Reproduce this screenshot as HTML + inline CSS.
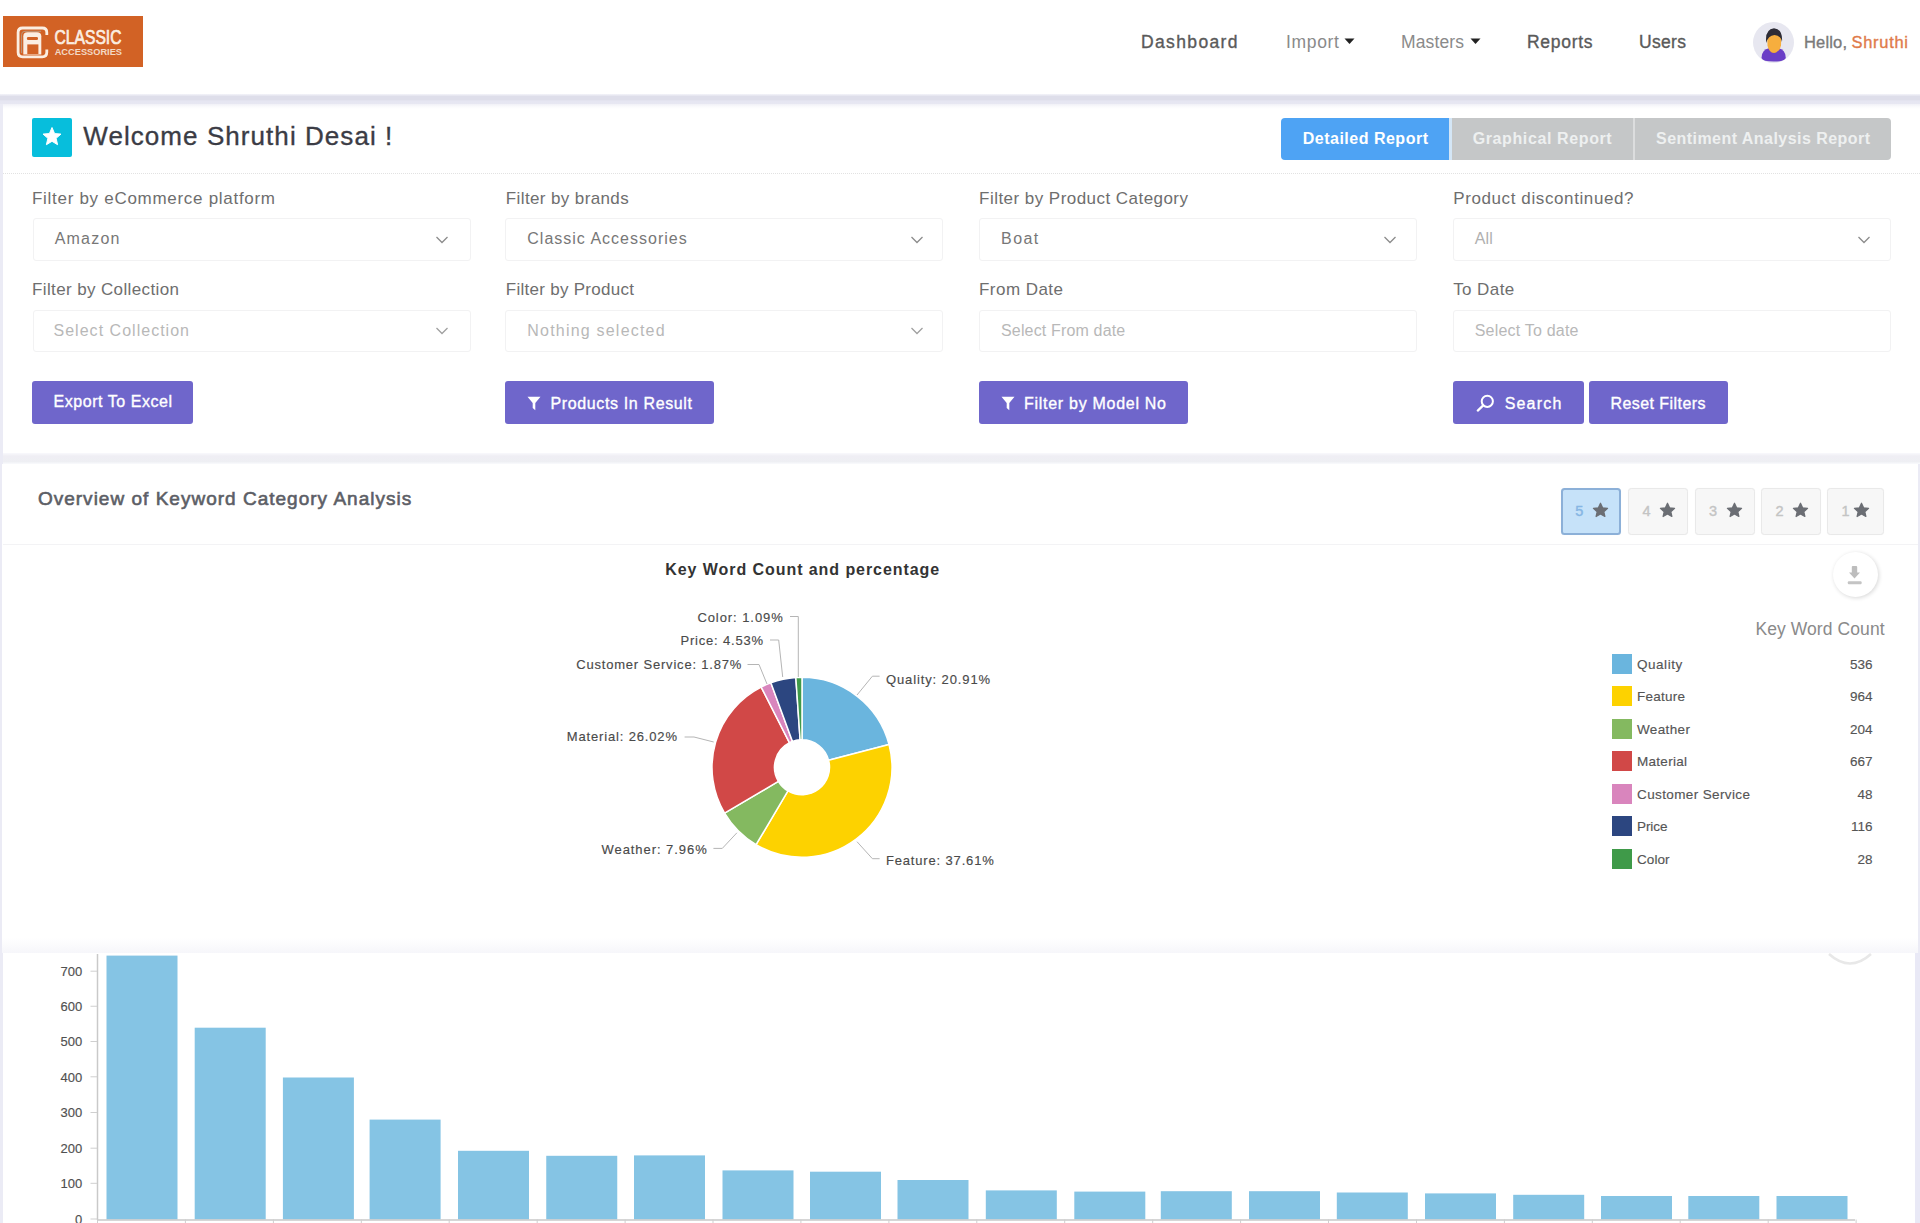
<!DOCTYPE html>
<html><head><meta charset="utf-8"><title>Dashboard</title>
<style>
*{margin:0;padding:0;box-sizing:border-box}
html,body{width:1920px;height:1223px;overflow:hidden}
body{background:#fff;position:relative;font-family:'Liberation Sans',sans-serif}
.a{position:absolute}
.t{position:absolute;white-space:nowrap;line-height:1}
#nav{left:-12px;top:-12px;width:1944px;height:106px;background:#fff}
#band{left:-12px;top:93.5px;width:1944px;height:10.5px;background:linear-gradient(#f4f4fa 0,#dedeea 2.5px,#dedeea 6px,#e6e6f2 6.8px,#e7e7f2 10.5px)}
#card1{left:3px;top:104px;width:1929px;height:349px;background:linear-gradient(#f1f1f7 0,#fbfbfd 3px,#fff 5px)}
#gap1{left:3px;top:452.5px;width:1929px;height:11px;background:linear-gradient(#f9f9fc 0,#efeef4 3px,#eeeff3 8.5px,#f9fafd 11px)}
#card2{left:2px;top:463.5px;width:1916px;height:489.5px;background:linear-gradient(#fff 0,#fff 474px,#f6f6fa 489.5px)}
#card3{left:3px;top:953px;width:1912px;height:282px;background:#fff}
.sep{height:1px}
#logo{left:3px;top:16px;width:140px;height:51px;background:#d26225}
#avatar{left:1752.6px;top:21.5px;width:41px;height:41px;border-radius:50%;background:#e7e7f0;overflow:hidden}
#starbox{left:32px;top:118px;width:40px;height:39px;background:#07bedc;border-radius:2px}
.tab{top:117.5px;height:42.5px}
#tab1{left:1281px;width:167.5px;background:#4ea3f4;border-radius:4px 0 0 4px}
#tab2{left:1451.5px;width:181.5px;background:#c5c7c8}
#tab3{left:1634.8px;width:256.2px;background:#c5c7c8;border-radius:0 4px 4px 0}
.sel{height:43px;width:438px;border:1px solid #f2f2f3;border-radius:3px;background:#fff}
.chev{width:9px;height:9px;border-right:1.5px solid #8a8a8a;border-bottom:1.5px solid #8a8a8a;transform:rotate(45deg)}
.btn{background:#6f66cb;border-radius:3px;height:43px}
.sb{top:487.5px;width:60px;height:47px;border:1.5px solid #e9e9e9;border-radius:3.5px;background:#f7f7f7;box-shadow:0 0 1px rgba(0,0,0,.06)}
.sb.on{background:#c6e2f9;border:2px solid #8cb0d8}
#dl{left:1833px;top:552px;width:45px;height:45px;border-radius:50%;background:#fff;box-shadow:1px 1px 4px rgba(0,0,0,.16)}
.sw{left:1612px;width:20px;height:20px}

#wrap{position:absolute;left:-12px;top:-12px;width:1944px;height:1247px;background:#ebebf5}
#inner{position:absolute;left:12px;top:12px;width:1920px;height:1223px}

</style></head><body>
<div id="wrap"><div id="inner">
<div class="a" id="nav"></div>
<div class="a" id="band"></div>
<div class="a" id="card1"></div>
<div class="a" id="gap1"></div>
<div class="a" id="card2"></div>
<div class="a" id="card3"></div>
<div class="a sep" style="left:3px;top:173px;width:1917px;border-top:1px dotted #e2e2e2"></div>
<div class="a sep" style="left:3px;top:544px;width:1915px;background:#f3f3f5"></div>
<div class="a" id="logo">
<svg width="140" height="51" viewBox="0 0 140 51" style="position:absolute;left:0;top:0">
 <path d="M43.8 19.1 L43.8 16.5 Q43.8 12 39.3 12 L19.6 12 Q15.1 12 15.1 16.5 L15.1 36.3 Q15.1 40.8 19.6 40.8 L39.3 40.8 Q43.8 40.8 43.8 36.3 L43.8 33.5" fill="none" stroke="#fbeee2" stroke-width="2.8"/>
 <path d="M18.6 37 L18.6 18.5 Q18.6 15.3 22 15.3 L38 15.3" fill="none" stroke="#b99a80" stroke-width="1"/>
 <path d="M20.3 38.5 L20.3 20.2 Q20.3 16.2 24.6 16.2 L34 16.2 Q38.3 16.2 38.3 20.2 L38.3 38.5 Z" fill="#fbeee2"/>
 <rect x="23.9" y="21.1" width="11.1" height="3" rx="1.3" fill="#d26225"/>
 <rect x="24.3" y="28.4" width="11.1" height="9.6" fill="#d26225"/>
 <text x="51.5" y="28.4" font-family="Liberation Sans" font-size="20" fill="#fbeee2" stroke="#fbeee2" stroke-width="0.7" textLength="67" lengthAdjust="spacingAndGlyphs">CLASSIC</text>
 <text x="51.7" y="38.5" font-family="Liberation Sans" font-weight="bold" font-size="8.4" fill="#f3d9c6" textLength="67.3" lengthAdjust="spacingAndGlyphs">ACCESSORIES</text>
</svg></div>
<svg class="a" style="left:1344px;top:38px" width="11" height="7" viewBox="0 0 11 7"><path d="M0.5 0.5 L10.5 0.5 L5.5 6 Z" fill="#222"/></svg>
<svg class="a" style="left:1470px;top:38px" width="11" height="7" viewBox="0 0 11 7"><path d="M0.5 0.5 L10.5 0.5 L5.5 6 Z" fill="#222"/></svg>
<div class="a" id="avatar">
<svg width="41" height="41" viewBox="0 0 41 41" style="position:absolute;left:0;top:0">
 <path d="M8.5 36 Q8.5 27.5 16.5 26 L25 26 Q32.8 27.5 32.8 36 Q31.5 39.6 20.6 39.6 Q9.5 39.6 8.5 36 Z" fill="#6a3ec6"/>
 <path d="M17.3 24 L24.5 24 L24 30 Q20.9 32 17.8 30 Z" fill="#eaa236"/>
 <path d="M14.3 18 Q14.3 11.5 21.2 11.5 Q28.2 11.5 28.2 18 L28 23.5 Q27 30 21.2 30.5 Q15.3 30 14.5 23.5 Z" fill="#f6ae3e"/>
 <path d="M13.3 21 Q11.5 7.5 21 6.3 Q30 7 29 20 Q28 13.5 21.5 13 Q15 13.5 13.3 21 Z" fill="#2d2c36"/>
</svg></div>
<div class="a" id="starbox">
<svg width="40" height="39" viewBox="0 0 40 39" style="position:absolute;left:0;top:0">
 <path d="M20 9.5 L22.6 15.6 L29 16.1 L24.1 20.3 L25.6 26.7 L20 23.3 L14.4 26.7 L15.9 20.3 L11 16.1 L17.4 15.6 Z" fill="#fff" stroke="#fff" stroke-width="1" stroke-linejoin="round"/>
</svg></div>
<div class="a tab" style="left:1448px;width:4px;background:#d4e6f6"></div><div class="a tab" style="left:1632px;width:4px;background:#dcddde"></div><div class="a tab" id="tab1"></div><div class="a tab" id="tab2"></div><div class="a tab" id="tab3"></div>
<div class="a sel" style="left:33px;top:218px"></div>
<div class="a sel" style="left:33px;top:309.5px;height:42.5px"></div>
<div class="a sel" style="left:505px;top:218px"></div>
<div class="a sel" style="left:505px;top:309.5px;height:42.5px"></div>
<div class="a sel" style="left:979px;top:218px"></div>
<div class="a sel" style="left:979px;top:309.5px;height:42.5px"></div>
<div class="a sel" style="left:1453px;top:218px"></div>
<div class="a sel" style="left:1453px;top:309.5px;height:42.5px"></div>
<svg class="a" style="left:435px;top:235px" width="14" height="10" viewBox="0 0 14 10"><path d="M1.5 2 L7 7.5 L12.5 2" fill="none" stroke="#8c8c8c" stroke-width="1.3"/></svg>
<svg class="a" style="left:909.5px;top:235px" width="14" height="10" viewBox="0 0 14 10"><path d="M1.5 2 L7 7.5 L12.5 2" fill="none" stroke="#8c8c8c" stroke-width="1.3"/></svg>
<svg class="a" style="left:1382.5px;top:235px" width="14" height="10" viewBox="0 0 14 10"><path d="M1.5 2 L7 7.5 L12.5 2" fill="none" stroke="#8c8c8c" stroke-width="1.3"/></svg>
<svg class="a" style="left:1856.5px;top:235px" width="14" height="10" viewBox="0 0 14 10"><path d="M1.5 2 L7 7.5 L12.5 2" fill="none" stroke="#8c8c8c" stroke-width="1.3"/></svg>
<svg class="a" style="left:435px;top:326px" width="14" height="10" viewBox="0 0 14 10"><path d="M1.5 2 L7 7.5 L12.5 2" fill="none" stroke="#a0a0a0" stroke-width="1.3"/></svg>
<svg class="a" style="left:909.5px;top:326px" width="14" height="10" viewBox="0 0 14 10"><path d="M1.5 2 L7 7.5 L12.5 2" fill="none" stroke="#a0a0a0" stroke-width="1.3"/></svg>
<div class="a btn" style="left:32px;top:380.5px;width:160.5px"></div>
<div class="a btn" style="left:505px;top:381.3px;width:208.7px"></div>
<div class="a btn" style="left:979px;top:381.3px;width:208.5px"></div>
<div class="a btn" style="left:1453px;top:381.3px;width:130.7px"></div>
<div class="a btn" style="left:1588.5px;top:381.3px;width:139px"></div>
<svg class="a" style="left:527px;top:396px" width="14" height="15" viewBox="0 0 14 15"><path d="M0.5 0.8 L13.5 0.8 L8.3 7 L8.3 14.2 L5.7 12 L5.7 7 Z" fill="#fff"/></svg>
<svg class="a" style="left:1000.5px;top:396px" width="14" height="15" viewBox="0 0 14 15"><path d="M0.5 0.8 L13.5 0.8 L8.3 7 L8.3 14.2 L5.7 12 L5.7 7 Z" fill="#fff"/></svg>
<svg class="a" style="left:1475.5px;top:393.5px" width="19" height="18" viewBox="0 0 19 18"><circle cx="11.3" cy="7.3" r="5.6" fill="none" stroke="#fff" stroke-width="2"/><path d="M7.2 11.4 L1.8 16.6" stroke="#fff" stroke-width="2.2" stroke-linecap="round"/></svg>
<div class="a sb on" style="left:1561.3px;width:60px"></div>
<span class="t" style="left:1575.3px;top:503.9px;font-size:14.5px;font-weight:normal;-webkit-text-stroke:0.4px #86b6e4;color:#86b6e4">5</span>
<svg class="a" style="left:1591.8px;top:502.3px" width="17" height="16" viewBox="0 0 17 16"><path d="M8.5 1.2 L10.6 5.8 L15.6 6.3 L11.8 9.7 L12.9 14.5 L8.5 12 L4.1 14.5 L5.2 9.7 L1.4 6.3 L6.4 5.8 Z" fill="#6b6e74" stroke="#6b6e74" stroke-width="1.2" stroke-linejoin="round"/></svg>
<div class="a sb" style="left:1628.4px;width:60px"></div>
<span class="t" style="left:1642.4px;top:503.9px;font-size:14.5px;font-weight:normal;-webkit-text-stroke:0.4px #c4c4c4;color:#c4c4c4">4</span>
<svg class="a" style="left:1658.9px;top:502.3px" width="17" height="16" viewBox="0 0 17 16"><path d="M8.5 1.2 L10.6 5.8 L15.6 6.3 L11.8 9.7 L12.9 14.5 L8.5 12 L4.1 14.5 L5.2 9.7 L1.4 6.3 L6.4 5.8 Z" fill="#6b6e74" stroke="#6b6e74" stroke-width="1.2" stroke-linejoin="round"/></svg>
<div class="a sb" style="left:1695px;width:60px"></div>
<span class="t" style="left:1709px;top:503.9px;font-size:14.5px;font-weight:normal;-webkit-text-stroke:0.4px #c4c4c4;color:#c4c4c4">3</span>
<svg class="a" style="left:1725.5px;top:502.3px" width="17" height="16" viewBox="0 0 17 16"><path d="M8.5 1.2 L10.6 5.8 L15.6 6.3 L11.8 9.7 L12.9 14.5 L8.5 12 L4.1 14.5 L5.2 9.7 L1.4 6.3 L6.4 5.8 Z" fill="#6b6e74" stroke="#6b6e74" stroke-width="1.2" stroke-linejoin="round"/></svg>
<div class="a sb" style="left:1761.4px;width:60px"></div>
<span class="t" style="left:1775.4px;top:503.9px;font-size:14.5px;font-weight:normal;-webkit-text-stroke:0.4px #c4c4c4;color:#c4c4c4">2</span>
<svg class="a" style="left:1791.9px;top:502.3px" width="17" height="16" viewBox="0 0 17 16"><path d="M8.5 1.2 L10.6 5.8 L15.6 6.3 L11.8 9.7 L12.9 14.5 L8.5 12 L4.1 14.5 L5.2 9.7 L1.4 6.3 L6.4 5.8 Z" fill="#6b6e74" stroke="#6b6e74" stroke-width="1.2" stroke-linejoin="round"/></svg>
<div class="a sb" style="left:1827.4px;width:57px"></div>
<span class="t" style="left:1841.4px;top:503.9px;font-size:14.5px;font-weight:normal;-webkit-text-stroke:0.4px #c4c4c4;color:#c4c4c4">1</span>
<svg class="a" style="left:1853.4px;top:502.3px" width="17" height="16" viewBox="0 0 17 16"><path d="M8.5 1.2 L10.6 5.8 L15.6 6.3 L11.8 9.7 L12.9 14.5 L8.5 12 L4.1 14.5 L5.2 9.7 L1.4 6.3 L6.4 5.8 Z" fill="#6b6e74" stroke="#6b6e74" stroke-width="1.2" stroke-linejoin="round"/></svg>
<div class="a" id="dl"><svg width="45" height="45" viewBox="0 0 45 45" style="position:absolute;left:0;top:0"><path d="M18.8 15 Q18.8 14 19.8 14 L23.2 14 Q24.2 14 24.2 15 L24.2 20.5 L27 20.5 L21.5 26.5 L16 20.5 L18.8 20.5 Z" fill="#bdbdbd"/><rect x="14.8" y="29.3" width="13.8" height="3" rx="1" fill="#c4c4c4"/></svg></div>
<svg class="a" style="left:1825px;top:953px" width="50" height="14" viewBox="0 0 50 14"><path d="M4 1 Q25 20 46 1" fill="none" stroke="#e8e8e8" stroke-width="2.5"/></svg>
<svg class="a" style="left:0;top:0" width="1920" height="1223" viewBox="0 0 1920 1223"><path d="M802.00 677.30 A90 90 0 0 1 889.05 744.44 L828.60 760.32 A27.5 27.5 0 0 0 802.00 739.80 Z" fill="#6ab5de" stroke="#fff" stroke-width="1.5" stroke-linejoin="round"/><path d="M889.05 744.44 A90 90 0 0 1 756.06 844.69 L787.96 790.95 A27.5 27.5 0 0 0 828.60 760.32 Z" fill="#fdd200" stroke="#fff" stroke-width="1.5" stroke-linejoin="round"/><path d="M756.06 844.69 A90 90 0 0 1 724.58 813.19 L778.34 781.32 A27.5 27.5 0 0 0 787.96 790.95 Z" fill="#84b960" stroke="#fff" stroke-width="1.5" stroke-linejoin="round"/><path d="M724.58 813.19 A90 90 0 0 1 761.19 687.09 L789.53 742.79 A27.5 27.5 0 0 0 778.34 781.32 Z" fill="#d14847" stroke="#fff" stroke-width="1.5" stroke-linejoin="round"/><path d="M761.19 687.09 A90 90 0 0 1 770.88 682.85 L792.49 741.50 A27.5 27.5 0 0 0 789.53 742.79 Z" fill="#d985bd" stroke="#fff" stroke-width="1.5" stroke-linejoin="round"/><path d="M770.88 682.85 A90 90 0 0 1 795.83 677.51 L800.11 739.86 A27.5 27.5 0 0 0 792.49 741.50 Z" fill="#2c4680" stroke="#fff" stroke-width="1.5" stroke-linejoin="round"/><path d="M795.83 677.51 A90 90 0 0 1 802.00 677.30 L802.00 739.80 A27.5 27.5 0 0 0 800.11 739.86 Z" fill="#3f9a49" stroke="#fff" stroke-width="1.5" stroke-linejoin="round"/><path d="M790 616.5 L798.3 616.5 L798.3 677" fill="none" stroke="#b5b5b5" stroke-width="1"/><path d="M770 640 L778.7 640 L782.7 677" fill="none" stroke="#b5b5b5" stroke-width="1"/><path d="M747.5 664.5 L759 664.5 L767 684" fill="none" stroke="#b5b5b5" stroke-width="1"/><path d="M684.6 737 L694 737 L713.7 742" fill="none" stroke="#b5b5b5" stroke-width="1"/><path d="M713.4 848.4 L722.3 848.4 L736.9 832.8" fill="none" stroke="#b5b5b5" stroke-width="1"/><path d="M857 695 L872.4 676.2 L879.6 676.2" fill="none" stroke="#b5b5b5" stroke-width="1"/><path d="M857 841.7 L872.4 858.7 L879.6 858.7" fill="none" stroke="#b5b5b5" stroke-width="1"/></svg>
<div class="a sw" style="top:653.7px;background:#6ab5de"></div>
<div class="a sw" style="top:686.1px;background:#fdd200"></div>
<div class="a sw" style="top:718.5px;background:#84b960"></div>
<div class="a sw" style="top:750.8px;background:#d14847"></div>
<div class="a sw" style="top:784.2px;background:#d985bd"></div>
<div class="a sw" style="top:816.2px;background:#2c4680"></div>
<div class="a sw" style="top:849px;background:#3f9a49"></div>
<svg class="a" style="left:0;top:0" width="1920" height="1223" viewBox="0 0 1920 1223"><rect x="106.5" y="955.6" width="71" height="263.9" fill="#85c4e4"/><rect x="194.7" y="1027.7" width="71" height="191.79999999999995" fill="#85c4e4"/><rect x="282.9" y="1077.5" width="71" height="142.0" fill="#85c4e4"/><rect x="369.6" y="1119.6" width="71" height="99.90000000000009" fill="#85c4e4"/><rect x="458" y="1150.8" width="71" height="68.70000000000005" fill="#85c4e4"/><rect x="546.25" y="1155.8" width="71" height="63.700000000000045" fill="#85c4e4"/><rect x="634" y="1155.4" width="71" height="64.09999999999991" fill="#85c4e4"/><rect x="722.5" y="1170.4" width="71" height="49.09999999999991" fill="#85c4e4"/><rect x="810" y="1171.7" width="71" height="47.799999999999955" fill="#85c4e4"/><rect x="897.5" y="1180" width="71" height="39.5" fill="#85c4e4"/><rect x="985.8" y="1190.4" width="71" height="29.09999999999991" fill="#85c4e4"/><rect x="1074.3" y="1191.6" width="71" height="27.90000000000009" fill="#85c4e4"/><rect x="1160.8" y="1191.2" width="71" height="28.299999999999955" fill="#85c4e4"/><rect x="1249" y="1191.2" width="71" height="28.299999999999955" fill="#85c4e4"/><rect x="1336.8" y="1192.5" width="71" height="27.0" fill="#85c4e4"/><rect x="1425" y="1193.4" width="71" height="26.09999999999991" fill="#85c4e4"/><rect x="1513.2" y="1194.8" width="71" height="24.700000000000045" fill="#85c4e4"/><rect x="1601" y="1196" width="71" height="23.5" fill="#85c4e4"/><rect x="1688.3" y="1196" width="71" height="23.5" fill="#85c4e4"/><rect x="1776.5" y="1196" width="71" height="23.5" fill="#85c4e4"/><path d="M97.5 954 L97.5 1220.0" stroke="#c9c9c9" stroke-width="1.5"/><path d="M97 1220.0 L1855 1220.0" stroke="#c9c9c9" stroke-width="1.5"/><path d="M90.5 971.2 L97 971.2" stroke="#cfcfcf" stroke-width="1"/><path d="M90.5 1006.25 L97 1006.25" stroke="#cfcfcf" stroke-width="1"/><path d="M90.5 1041.5 L97 1041.5" stroke="#cfcfcf" stroke-width="1"/><path d="M90.5 1076.8 L97 1076.8" stroke="#cfcfcf" stroke-width="1"/><path d="M90.5 1112.5 L97 1112.5" stroke="#cfcfcf" stroke-width="1"/><path d="M90.5 1148.2 L97 1148.2" stroke="#cfcfcf" stroke-width="1"/><path d="M90.5 1183.3 L97 1183.3" stroke="#cfcfcf" stroke-width="1"/><path d="M90.5 1219 L97 1219" stroke="#cfcfcf" stroke-width="1"/><path d="M97.5 1219.5 L97.5 1223" stroke="#cfcfcf" stroke-width="1"/><path d="M185.4 1219.5 L185.4 1223" stroke="#cfcfcf" stroke-width="1"/><path d="M273.4 1219.5 L273.4 1223" stroke="#cfcfcf" stroke-width="1"/><path d="M361.3 1219.5 L361.3 1223" stroke="#cfcfcf" stroke-width="1"/><path d="M449.2 1219.5 L449.2 1223" stroke="#cfcfcf" stroke-width="1"/><path d="M537.2 1219.5 L537.2 1223" stroke="#cfcfcf" stroke-width="1"/><path d="M625.1 1219.5 L625.1 1223" stroke="#cfcfcf" stroke-width="1"/><path d="M713.0 1219.5 L713.0 1223" stroke="#cfcfcf" stroke-width="1"/><path d="M800.9 1219.5 L800.9 1223" stroke="#cfcfcf" stroke-width="1"/><path d="M888.9 1219.5 L888.9 1223" stroke="#cfcfcf" stroke-width="1"/><path d="M976.8 1219.5 L976.8 1223" stroke="#cfcfcf" stroke-width="1"/><path d="M1064.7 1219.5 L1064.7 1223" stroke="#cfcfcf" stroke-width="1"/><path d="M1152.7 1219.5 L1152.7 1223" stroke="#cfcfcf" stroke-width="1"/><path d="M1240.6 1219.5 L1240.6 1223" stroke="#cfcfcf" stroke-width="1"/><path d="M1328.5 1219.5 L1328.5 1223" stroke="#cfcfcf" stroke-width="1"/><path d="M1416.5 1219.5 L1416.5 1223" stroke="#cfcfcf" stroke-width="1"/><path d="M1504.4 1219.5 L1504.4 1223" stroke="#cfcfcf" stroke-width="1"/><path d="M1592.3 1219.5 L1592.3 1223" stroke="#cfcfcf" stroke-width="1"/><path d="M1680.2 1219.5 L1680.2 1223" stroke="#cfcfcf" stroke-width="1"/><path d="M1768.2 1219.5 L1768.2 1223" stroke="#cfcfcf" stroke-width="1"/><path d="M1856.1 1219.5 L1856.1 1223" stroke="#cfcfcf" stroke-width="1"/></svg>
<div class="a" style="left:1915px;top:953px;width:17px;height:282px;background:#e9e9f6"></div>
<div id="texts">
<span class="t" id="nav1" style="left:1141.00px;top:33.62px;font-size:17.5px;font-weight:normal;color:#5a5a5a;font-family:'Liberation Sans', sans-serif;letter-spacing:1.359px;-webkit-text-stroke:0.35px #5a5a5a">Dashboard</span>
<span class="t" id="nav2" style="left:1286.00px;top:33.62px;font-size:17.5px;font-weight:normal;color:#8a8a8a;font-family:'Liberation Sans', sans-serif;letter-spacing:0.678px">Import</span>
<span class="t" id="nav3" style="left:1401.00px;top:33.62px;font-size:17.5px;font-weight:normal;color:#8a8a8a;font-family:'Liberation Sans', sans-serif;letter-spacing:0.128px">Masters</span>
<span class="t" id="nav4" style="left:1527.00px;top:33.62px;font-size:17.5px;font-weight:normal;color:#5a5a5a;font-family:'Liberation Sans', sans-serif;letter-spacing:0.703px;-webkit-text-stroke:0.35px #5a5a5a">Reports</span>
<span class="t" id="nav5" style="left:1639.00px;top:33.62px;font-size:17.5px;font-weight:normal;color:#5a5a5a;font-family:'Liberation Sans', sans-serif;letter-spacing:0.324px;-webkit-text-stroke:0.35px #5a5a5a">Users</span>
<span class="t" id="hello" style="left:1804.00px;top:33.77px;font-size:16.5px;font-weight:normal;color:#7a7a7a;font-family:'Liberation Sans', sans-serif;letter-spacing:0.163px;-webkit-text-stroke:0.35px #7a7a7a">Hello,</span>
<span class="t" id="shru" style="left:1851.50px;top:33.77px;font-size:16.5px;font-weight:normal;color:#e07a4a;font-family:'Liberation Sans', sans-serif;letter-spacing:0.703px;-webkit-text-stroke:0.35px #e07a4a">Shruthi</span>
<span class="t" id="welc" style="left:83.30px;top:123.30px;font-size:26px;font-weight:normal;color:#3b3c45;font-family:'Liberation Sans', sans-serif;letter-spacing:1.062px;-webkit-text-stroke:0.35px #3b3c45">Welcome Shruthi Desai !</span>
<span class="t" id="tx_tab1" style="left:1302.70px;top:131.40px;font-size:16px;font-weight:bold;color:#ffffff;font-family:'Liberation Sans', sans-serif;letter-spacing:0.504px">Detailed Report</span>
<span class="t" id="tx_tab2" style="left:1472.70px;top:131.40px;font-size:16px;font-weight:bold;color:#eef0f0;font-family:'Liberation Sans', sans-serif;letter-spacing:0.613px">Graphical Report</span>
<span class="t" id="tx_tab3" style="left:1656.00px;top:131.40px;font-size:16px;font-weight:bold;color:#eef0f0;font-family:'Liberation Sans', sans-serif;letter-spacing:0.458px">Sentiment Analysis Report</span>
<span class="t" id="l1" style="left:32.00px;top:189.55px;font-size:17px;font-weight:normal;color:#6e6e6e;font-family:'Liberation Sans', sans-serif;letter-spacing:0.708px">Filter by eCommerce platform</span>
<span class="t" id="l2" style="left:505.80px;top:189.55px;font-size:17px;font-weight:normal;color:#6e6e6e;font-family:'Liberation Sans', sans-serif;letter-spacing:0.382px">Filter by brands</span>
<span class="t" id="l3" style="left:979.10px;top:189.55px;font-size:17px;font-weight:normal;color:#6e6e6e;font-family:'Liberation Sans', sans-serif;letter-spacing:0.457px">Filter by Product Category</span>
<span class="t" id="l4" style="left:1453.20px;top:189.55px;font-size:17px;font-weight:normal;color:#6e6e6e;font-family:'Liberation Sans', sans-serif;letter-spacing:0.608px">Product discontinued?</span>
<span class="t" id="v1" style="left:54.70px;top:231.10px;font-size:16px;font-weight:normal;color:#777777;font-family:'Liberation Sans', sans-serif;letter-spacing:1.199px">Amazon</span>
<span class="t" id="v2" style="left:527.30px;top:231.10px;font-size:16px;font-weight:normal;color:#777777;font-family:'Liberation Sans', sans-serif;letter-spacing:1.001px">Classic Accessories</span>
<span class="t" id="v3" style="left:1001.10px;top:231.10px;font-size:16px;font-weight:normal;color:#777777;font-family:'Liberation Sans', sans-serif;letter-spacing:1.426px">Boat</span>
<span class="t" id="v4" style="left:1474.70px;top:231.10px;font-size:16px;font-weight:normal;color:#b0b0b0;font-family:'Liberation Sans', sans-serif;letter-spacing:0.109px">All</span>
<span class="t" id="l5" style="left:32.00px;top:280.95px;font-size:17px;font-weight:normal;color:#6e6e6e;font-family:'Liberation Sans', sans-serif;letter-spacing:0.377px">Filter by Collection</span>
<span class="t" id="l6" style="left:505.80px;top:280.95px;font-size:17px;font-weight:normal;color:#6e6e6e;font-family:'Liberation Sans', sans-serif;letter-spacing:0.277px">Filter by Product</span>
<span class="t" id="l7" style="left:979.00px;top:280.95px;font-size:17px;font-weight:normal;color:#6e6e6e;font-family:'Liberation Sans', sans-serif;letter-spacing:0.463px">From Date</span>
<span class="t" id="l8" style="left:1453.20px;top:280.95px;font-size:17px;font-weight:normal;color:#6e6e6e;font-family:'Liberation Sans', sans-serif;letter-spacing:0.418px">To Date</span>
<span class="t" id="p1" style="left:53.50px;top:323.20px;font-size:16px;font-weight:normal;color:#b8b8b8;font-family:'Liberation Sans', sans-serif;letter-spacing:1.021px">Select Collection</span>
<span class="t" id="p2" style="left:527.30px;top:323.20px;font-size:16px;font-weight:normal;color:#b8b8b8;font-family:'Liberation Sans', sans-serif;letter-spacing:1.208px">Nothing selected</span>
<span class="t" id="p3" style="left:1001.00px;top:323.20px;font-size:16px;font-weight:normal;color:#b8b8b8;font-family:'Liberation Sans', sans-serif;letter-spacing:0.158px">Select From date</span>
<span class="t" id="p4" style="left:1474.70px;top:323.20px;font-size:16px;font-weight:normal;color:#b8b8b8;font-family:'Liberation Sans', sans-serif;letter-spacing:0.207px">Select To date</span>
<span class="t" id="b1" style="left:53.50px;top:394.40px;font-size:16px;font-weight:normal;color:#ffffff;font-family:'Liberation Sans', sans-serif;letter-spacing:0.545px;-webkit-text-stroke:0.35px #ffffff">Export To Excel</span>
<span class="t" id="b2" style="left:550.40px;top:395.80px;font-size:16px;font-weight:normal;color:#ffffff;font-family:'Liberation Sans', sans-serif;letter-spacing:0.639px;-webkit-text-stroke:0.35px #ffffff">Products In Result</span>
<span class="t" id="b3" style="left:1024.00px;top:395.80px;font-size:16px;font-weight:normal;color:#ffffff;font-family:'Liberation Sans', sans-serif;letter-spacing:0.716px;-webkit-text-stroke:0.35px #ffffff">Filter by Model No</span>
<span class="t" id="b4" style="left:1504.70px;top:396.10px;font-size:16px;font-weight:normal;color:#ffffff;font-family:'Liberation Sans', sans-serif;letter-spacing:1.179px;-webkit-text-stroke:0.35px #ffffff">Search</span>
<span class="t" id="b5" style="left:1610.40px;top:396.10px;font-size:16px;font-weight:normal;color:#ffffff;font-family:'Liberation Sans', sans-serif;letter-spacing:0.450px;-webkit-text-stroke:0.35px #ffffff">Reset Filters</span>
<span class="t" id="ov" style="left:37.90px;top:489.35px;font-size:19px;font-weight:normal;color:#5c5e66;font-family:'Liberation Sans', sans-serif;letter-spacing:1.013px;-webkit-text-stroke:0.6px #5c5e66">Overview of Keyword Category Analysis</span>
<span class="t" id="kwc" style="left:1755.40px;top:620.73px;font-size:17.5px;font-weight:normal;color:#8a8a8a;font-family:'Liberation Sans', sans-serif;letter-spacing:0.086px">Key Word Count</span>
<span class="t" id="ptitle" style="left:665.30px;top:562.40px;font-size:16px;font-weight:bold;color:#333333;font-family:'Liberation Sans', sans-serif;letter-spacing:0.934px">Key Word Count and percentage</span>
<span class="t" id="pl1" style="left:697.40px;top:610.65px;font-size:13px;font-weight:normal;color:#4a4a4a;font-family:'Liberation Sans', sans-serif;letter-spacing:0.931px;-webkit-text-stroke:0.15px #4a4a4a">Color: 1.09%</span>
<span class="t" id="pl2" style="left:680.50px;top:633.65px;font-size:13px;font-weight:normal;color:#4a4a4a;font-family:'Liberation Sans', sans-serif;letter-spacing:0.800px;-webkit-text-stroke:0.15px #4a4a4a">Price: 4.53%</span>
<span class="t" id="pl3" style="left:576.20px;top:657.95px;font-size:13px;font-weight:normal;color:#4a4a4a;font-family:'Liberation Sans', sans-serif;letter-spacing:0.809px;-webkit-text-stroke:0.15px #4a4a4a">Customer Service: 1.87%</span>
<span class="t" id="pl4" style="left:566.80px;top:730.45px;font-size:13px;font-weight:normal;color:#4a4a4a;font-family:'Liberation Sans', sans-serif;letter-spacing:0.843px;-webkit-text-stroke:0.15px #4a4a4a">Material: 26.02%</span>
<span class="t" id="pl5" style="left:601.50px;top:843.15px;font-size:13px;font-weight:normal;color:#4a4a4a;font-family:'Liberation Sans', sans-serif;letter-spacing:0.940px;-webkit-text-stroke:0.15px #4a4a4a">Weather: 7.96%</span>
<span class="t" id="pl6" style="left:885.90px;top:673.25px;font-size:13px;font-weight:normal;color:#4a4a4a;font-family:'Liberation Sans', sans-serif;letter-spacing:0.894px;-webkit-text-stroke:0.15px #4a4a4a">Quality: 20.91%</span>
<span class="t" id="pl7" style="left:885.90px;top:853.95px;font-size:13px;font-weight:normal;color:#4a4a4a;font-family:'Liberation Sans', sans-serif;letter-spacing:0.841px;-webkit-text-stroke:0.15px #4a4a4a">Feature: 37.61%</span>
<span class="t" id="lg0" style="left:1637.00px;top:657.93px;font-size:13.5px;font-weight:normal;color:#555555;font-family:'Liberation Sans', sans-serif;letter-spacing:0.528px;-webkit-text-stroke:0.15px #555555">Quality</span>
<span class="t" id="lv0" style="right:47.50px;top:657.93px;font-size:13.5px;font-weight:normal;color:#555555;font-family:'Liberation Sans', sans-serif;-webkit-text-stroke:0.15px #555555">536</span>
<span class="t" id="lg1" style="left:1637.00px;top:690.33px;font-size:13.5px;font-weight:normal;color:#555555;font-family:'Liberation Sans', sans-serif;letter-spacing:0.245px;-webkit-text-stroke:0.15px #555555">Feature</span>
<span class="t" id="lv1" style="right:47.50px;top:690.33px;font-size:13.5px;font-weight:normal;color:#555555;font-family:'Liberation Sans', sans-serif;-webkit-text-stroke:0.15px #555555">964</span>
<span class="t" id="lg2" style="left:1637.00px;top:722.73px;font-size:13.5px;font-weight:normal;color:#555555;font-family:'Liberation Sans', sans-serif;letter-spacing:0.370px;-webkit-text-stroke:0.15px #555555">Weather</span>
<span class="t" id="lv2" style="right:47.50px;top:722.73px;font-size:13.5px;font-weight:normal;color:#555555;font-family:'Liberation Sans', sans-serif;-webkit-text-stroke:0.15px #555555">204</span>
<span class="t" id="lg3" style="left:1637.00px;top:755.02px;font-size:13.5px;font-weight:normal;color:#555555;font-family:'Liberation Sans', sans-serif;letter-spacing:0.283px;-webkit-text-stroke:0.15px #555555">Material</span>
<span class="t" id="lv3" style="right:47.50px;top:755.02px;font-size:13.5px;font-weight:normal;color:#555555;font-family:'Liberation Sans', sans-serif;-webkit-text-stroke:0.15px #555555">667</span>
<span class="t" id="lg4" style="left:1637.00px;top:788.43px;font-size:13.5px;font-weight:normal;color:#555555;font-family:'Liberation Sans', sans-serif;letter-spacing:0.380px;-webkit-text-stroke:0.15px #555555">Customer Service</span>
<span class="t" id="lv4" style="right:47.50px;top:788.43px;font-size:13.5px;font-weight:normal;color:#555555;font-family:'Liberation Sans', sans-serif;-webkit-text-stroke:0.15px #555555">48</span>
<span class="t" id="lg5" style="left:1637.00px;top:820.43px;font-size:13.5px;font-weight:normal;color:#555555;font-family:'Liberation Sans', sans-serif;letter-spacing:-0.066px;-webkit-text-stroke:0.15px #555555">Price</span>
<span class="t" id="lv5" style="right:47.50px;top:820.43px;font-size:13.5px;font-weight:normal;color:#555555;font-family:'Liberation Sans', sans-serif;-webkit-text-stroke:0.15px #555555">116</span>
<span class="t" id="lg6" style="left:1637.00px;top:853.23px;font-size:13.5px;font-weight:normal;color:#555555;font-family:'Liberation Sans', sans-serif;letter-spacing:0.059px;-webkit-text-stroke:0.15px #555555">Color</span>
<span class="t" id="lv6" style="right:47.50px;top:853.23px;font-size:13.5px;font-weight:normal;color:#555555;font-family:'Liberation Sans', sans-serif;-webkit-text-stroke:0.15px #555555">28</span>
<span class="t" id="yt700" style="right:1837.70px;top:965.15px;font-size:13px;font-weight:normal;color:#505050;font-family:'Liberation Sans', sans-serif;-webkit-text-stroke:0.15px #505050">700</span>
<span class="t" id="yt600" style="right:1837.70px;top:1000.20px;font-size:13px;font-weight:normal;color:#505050;font-family:'Liberation Sans', sans-serif;-webkit-text-stroke:0.15px #505050">600</span>
<span class="t" id="yt500" style="right:1837.70px;top:1035.45px;font-size:13px;font-weight:normal;color:#505050;font-family:'Liberation Sans', sans-serif;-webkit-text-stroke:0.15px #505050">500</span>
<span class="t" id="yt400" style="right:1837.70px;top:1070.75px;font-size:13px;font-weight:normal;color:#505050;font-family:'Liberation Sans', sans-serif;-webkit-text-stroke:0.15px #505050">400</span>
<span class="t" id="yt300" style="right:1837.70px;top:1106.45px;font-size:13px;font-weight:normal;color:#505050;font-family:'Liberation Sans', sans-serif;-webkit-text-stroke:0.15px #505050">300</span>
<span class="t" id="yt200" style="right:1837.70px;top:1142.15px;font-size:13px;font-weight:normal;color:#505050;font-family:'Liberation Sans', sans-serif;-webkit-text-stroke:0.15px #505050">200</span>
<span class="t" id="yt100" style="right:1837.70px;top:1177.25px;font-size:13px;font-weight:normal;color:#505050;font-family:'Liberation Sans', sans-serif;-webkit-text-stroke:0.15px #505050">100</span>
<span class="t" id="yt0" style="right:1837.70px;top:1212.95px;font-size:13px;font-weight:normal;color:#505050;font-family:'Liberation Sans', sans-serif;-webkit-text-stroke:0.15px #505050">0</span>
</div>
</div></div>
</body></html>
